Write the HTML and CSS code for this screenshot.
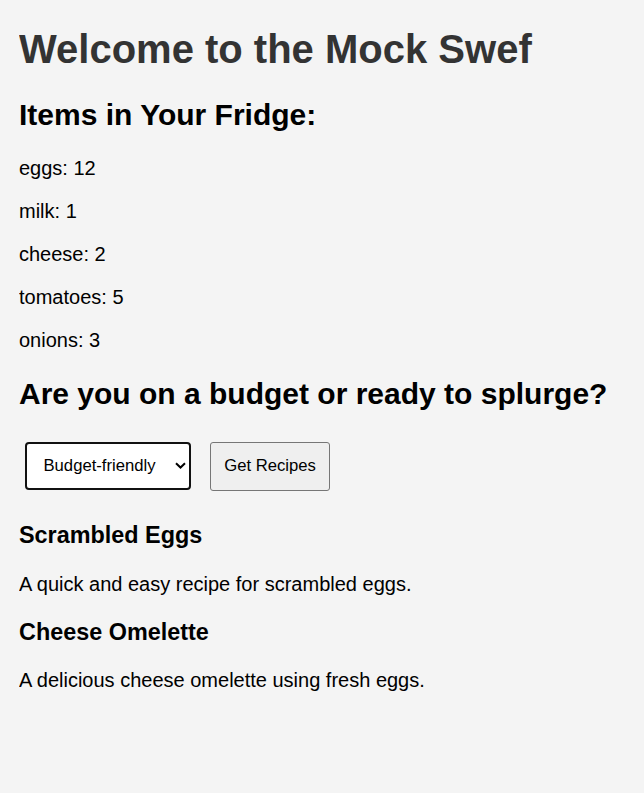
FILE: index.html
```html
<!DOCTYPE html>
<html lang="en">
<head>
<meta charset="utf-8">
<title>Mock Swef</title>
<link rel="stylesheet" href="styles.css">
</head>
<body>
<h1 class="title">Welcome to the Mock Swef</h1>
<h2 class="section">Items in Your Fridge:</h2>
<div class="fridge">
  <p class="item">eggs: 12</p>
  <p class="item">milk: 1</p>
  <p class="item">cheese: 2</p>
  <p class="item">tomatoes: 5</p>
  <p class="item">onions: 3</p>
</div>
<h2 class="section">Are you on a budget or ready to splurge?</h2>
<div class="controls">
  <span class="select-wrap">
    <select class="budget">
      <option>Budget-friendly</option>
      <option>Splurge</option>
    </select>
    <svg class="chevron" width="11" height="7" viewBox="0 0 11 7" aria-hidden="true"><path d="M1 1.2 L5.5 5.5 L10 1.2" fill="none" stroke="#000" stroke-width="2"/></svg>
  </span>
  <button class="get-btn" type="button">Get Recipes</button>
</div>
<div class="recipes">
  <div class="recipe">
    <h3 class="recipe-name">Scrambled Eggs</h3>
    <p class="recipe-desc">A quick and easy recipe for scrambled eggs.</p>
  </div>
  <div class="recipe">
    <h3 class="recipe-name">Cheese Omelette</h3>
    <p class="recipe-desc">A delicious cheese omelette using fresh eggs.</p>
  </div>
</div>
</body>
</html>
```
FILE: styles.css
```css
html {
  background: #f4f4f4;
}
body {
  margin: 0 20px 20px 19px;
  padding-top: 0.1px;
  font-family: Arial, "Liberation Sans", sans-serif;
  font-size: 20px;
  color: #000;
  background: #f4f4f4;
}
.title {
  font-size: 40px;
  font-weight: bold;
  color: #333;
  margin: 26.7px 0;
}
.section {
  font-size: 30px;
  font-weight: bold;
  margin: 24.9px 0;
}
.item {
  margin: 20px 0;
}
.controls {
  display: flex;
  align-items: flex-start;
  gap: 18.3px;
  padding: 6px 6px 8px;
}
.select-wrap {
  position: relative;
  display: block;
}
.budget {
  -webkit-appearance: none;
  appearance: none;
  display: block;
  font-family: Arial, "Liberation Sans", sans-serif;
  font-size: 16.67px;
  color: #000;
  background: #fff;
  border: 2px solid #111;
  border-radius: 4px;
  width: 166.4px;
  height: 47.4px;
  padding: 0 10px 0 16.5px;
  margin: 0;
}
.chevron {
  position: absolute;
  left: 150px;
  top: 20px;
  pointer-events: none;
}
.get-btn {
  font-family: Arial, "Liberation Sans", sans-serif;
  font-size: 16.67px;
  color: #000;
  background: #efefef;
  border: 1px solid #767676;
  border-radius: 3px;
  width: 120.7px;
  height: 48.7px;
  padding: 0;
  margin: 0;
}
.recipe-name {
  font-size: 23.4px;
  font-weight: bold;
  margin: 23.4px 0;
}
.recipe-desc {
  margin: 20px 0;
}
```
